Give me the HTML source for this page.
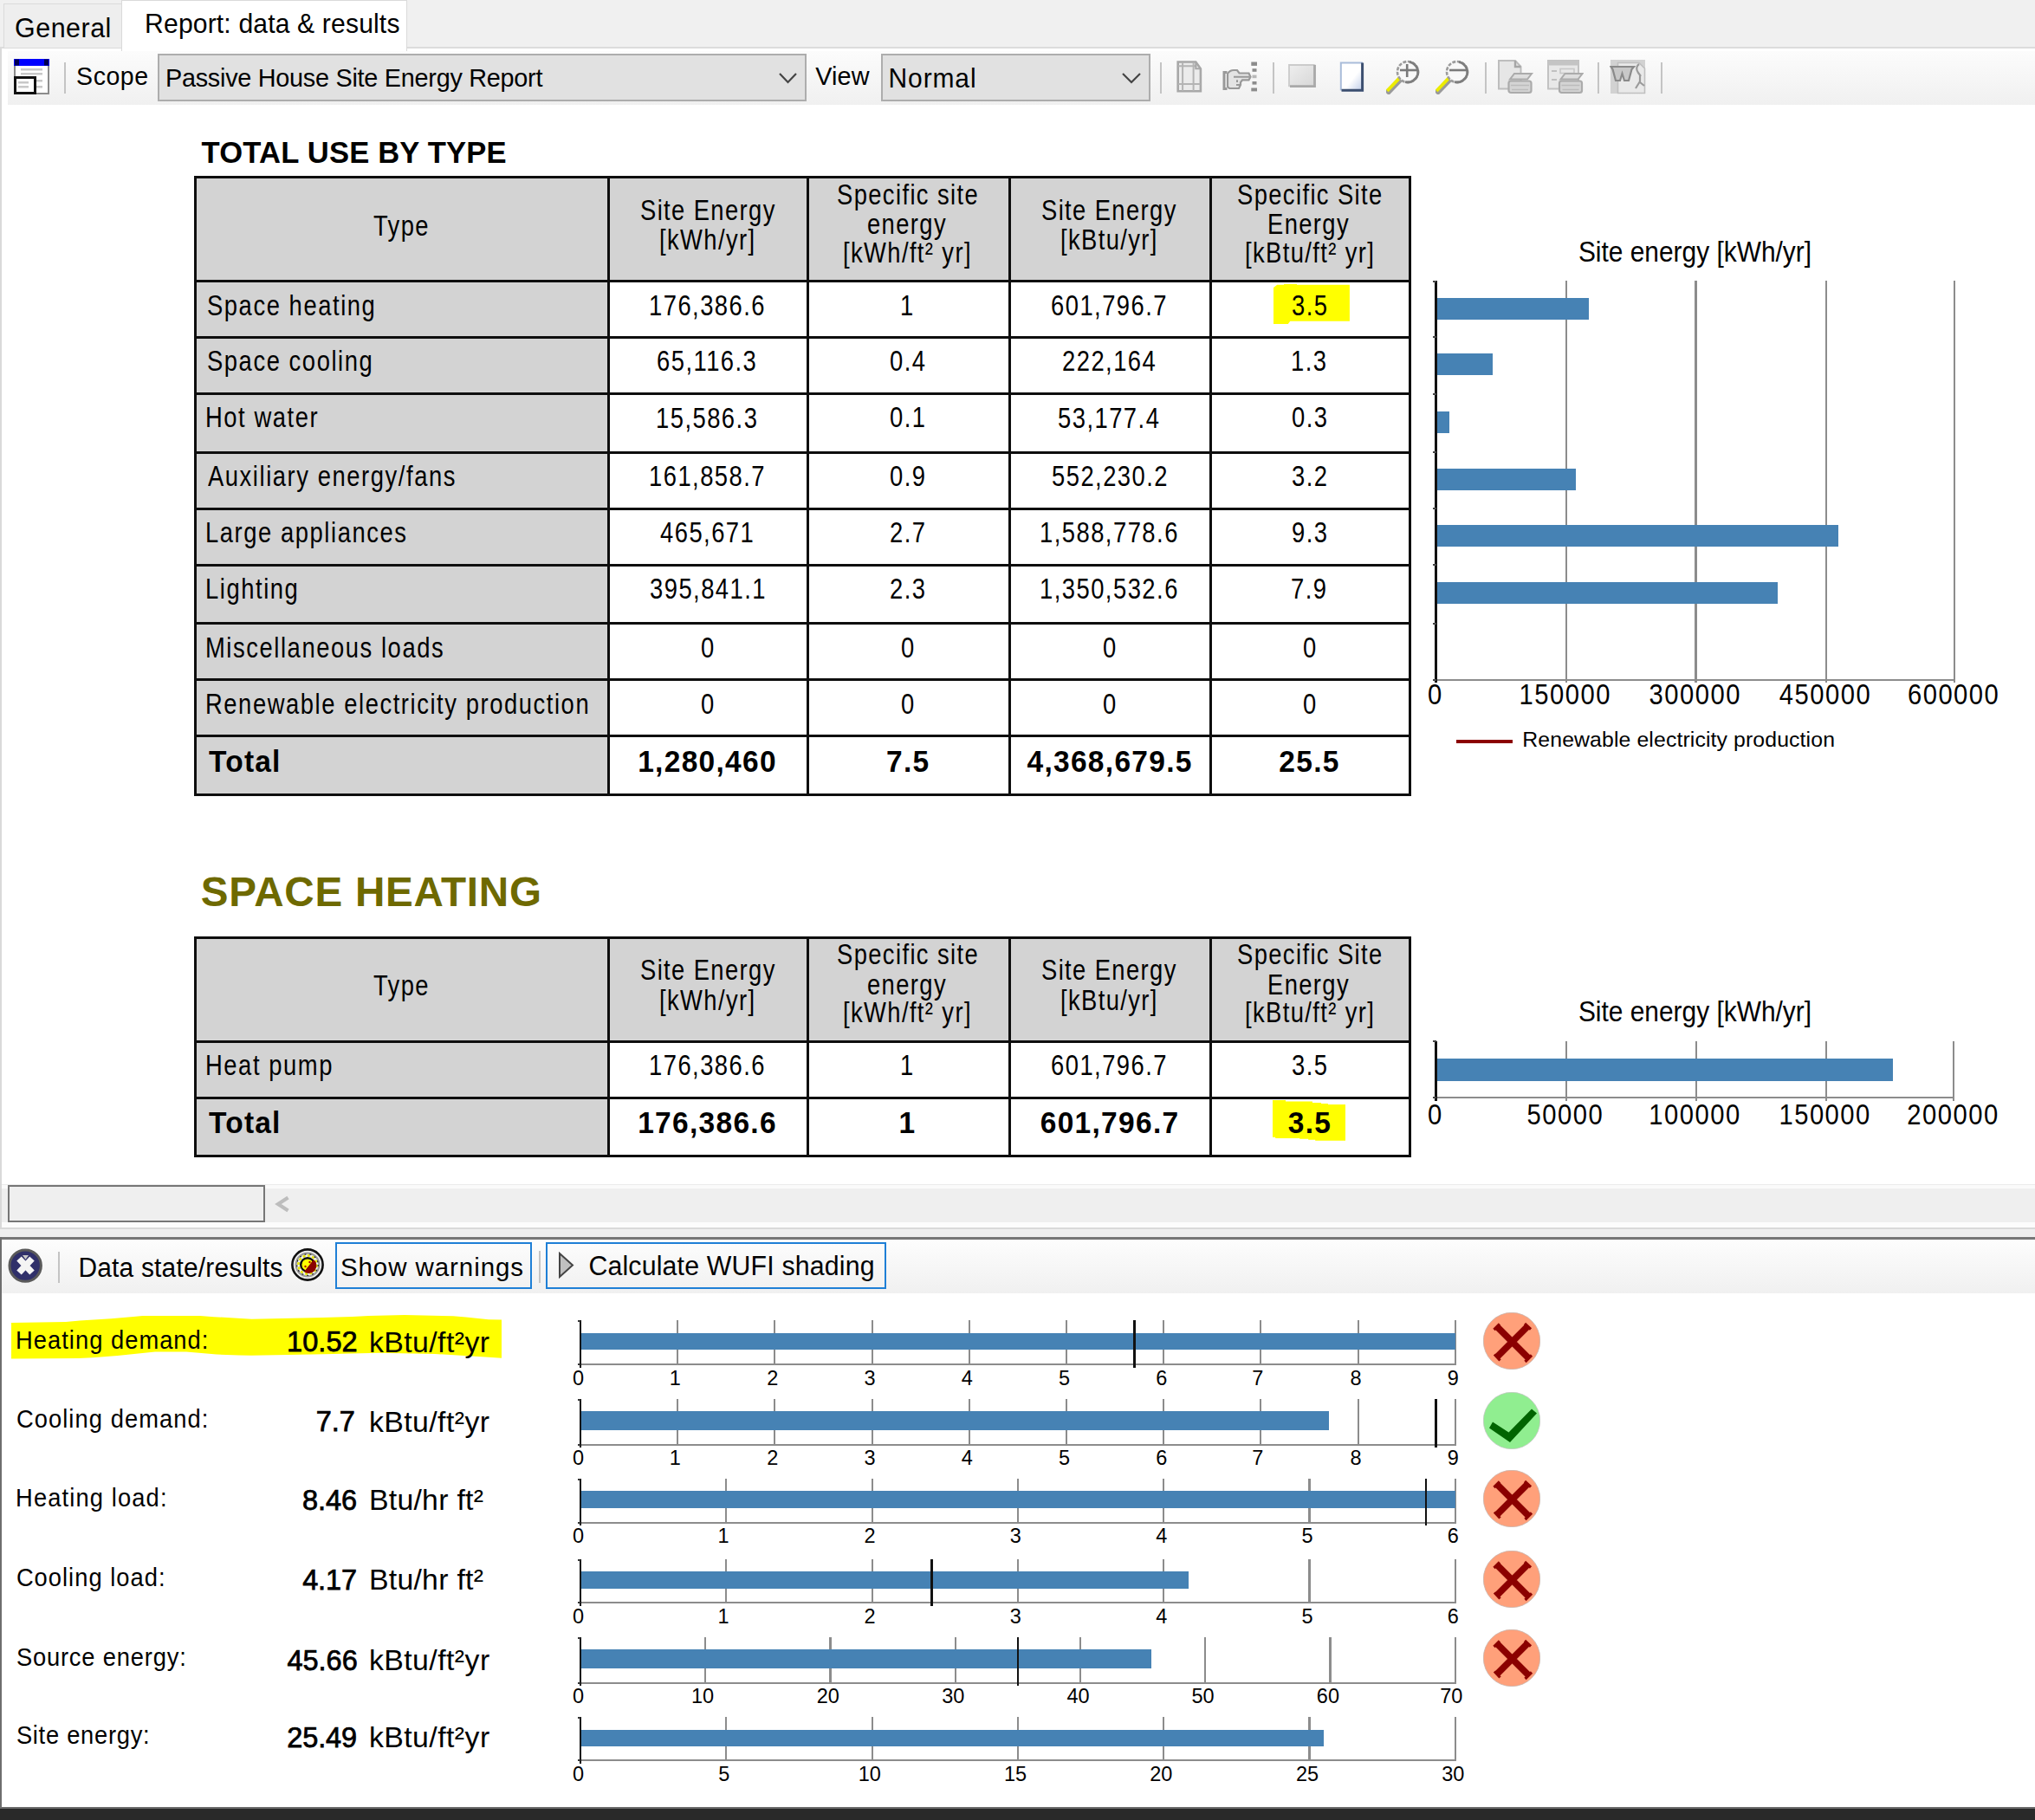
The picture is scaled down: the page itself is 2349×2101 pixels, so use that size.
<!DOCTYPE html>
<html><head><meta charset="utf-8"><style>
html,body{margin:0;padding:0;}
body{width:2349px;height:2101px;overflow:hidden;position:relative;background:#fff;font-family:"Liberation Sans",sans-serif;}
body>div,body>svg{position:absolute;}
</style></head><body>
<div style="left:0.00px;top:0.00px;width:2349.00px;height:55.00px;background:#f0f0f0;"></div>
<div style="left:0.00px;top:53.60px;width:2349.00px;height:2.00px;background:#dcdcdc;"></div>
<div style="left:4.00px;top:4.00px;width:137.00px;height:51.50px;border:1.5px solid #dadada;background:#eeeeee;box-sizing:border-box;"></div>
<div style="left:140.00px;top:0.00px;width:329.50px;height:58.50px;border:1.5px solid #dadada;background:#ffffff;box-sizing:border-box;border-bottom:none;"></div>
<div style="left:17.10px;top:17.46px;font-size:30.4px;line-height:30.4px;color:#000;letter-spacing:0.523px;white-space:pre;transform:scale(1.000,1.040);transform-origin:0 25.74px;">General</div>
<div style="left:167.10px;top:12.71px;font-size:30.1px;line-height:30.1px;color:#000;letter-spacing:0.157px;white-space:pre;transform:scale(1.000,1.040);transform-origin:0 25.49px;">Report: data &amp; results</div>
<div style="left:0.00px;top:56.00px;width:1.50px;height:1362.00px;background:#d9d9d9;"></div>
<div style="left:8.80px;top:58.50px;width:2340.20px;height:62.40px;background:linear-gradient(#fcfcfc,#f0f0f0);"></div>
<svg style="left:16px;top:68px" width="41" height="41" viewBox="0 0 41 41">
<rect x="1" y="1" width="39" height="39" fill="#fff" stroke="#8c8c8c" stroke-width="2"/>
<rect x="0" y="0" width="41" height="8" fill="#0000ff"/>
<rect x="1" y="0.5" width="5" height="7" fill="#000050"/><rect x="35" y="0.5" width="5" height="7" fill="#000050"/>
<rect x="8" y="11" width="25" height="2.5" fill="#c8c8c8"/><rect x="8" y="16" width="25" height="2.5" fill="#c8c8c8"/>
<rect x="25" y="24" width="8" height="2.5" fill="#c8c8c8"/><rect x="25" y="31" width="8" height="2.5" fill="#c8c8c8"/>
<rect x="1.5" y="21.5" width="23" height="18" fill="#fff" stroke="#111" stroke-width="3"/>
<rect x="5" y="26" width="12" height="2.5" fill="#c8c8c8"/><rect x="5" y="31" width="12" height="2.5" fill="#c8c8c8"/>
</svg>
<div style="left:74.20px;top:71.50px;width:2.00px;height:36.50px;background:#c4c4c4;"></div>
<div style="left:88.10px;top:74.17px;font-size:28.5px;line-height:28.5px;color:#000;letter-spacing:0.551px;white-space:pre;transform:scale(1.000,1.040);transform-origin:0 24.13px;">Scope</div>
<div style="left:182.00px;top:62.00px;width:748.50px;height:55.00px;border:2px solid #adadad;background:#e1e1e1;box-sizing:border-box;"></div>
<div style="left:191.00px;top:76.32px;font-size:28.8px;line-height:28.8px;color:#000;letter-spacing:-0.256px;white-space:pre;transform:scale(1.000,1.040);transform-origin:0 24.38px;">Passive House Site Energy Report</div>
<svg style="left:899px;top:84px" width="21" height="12.5" viewBox="0 0 21 12.5"><polyline points="1,1 10.5,11.0 20,1" fill="none" stroke="#444" stroke-width="2.2"/></svg>
<div style="left:941.20px;top:74.27px;font-size:28.8px;line-height:28.8px;color:#000;letter-spacing:0.174px;white-space:pre;transform:scale(1.000,1.040);transform-origin:0 24.38px;">View</div>
<div style="left:1017.00px;top:62.00px;width:311.00px;height:55.00px;border:2px solid #adadad;background:#e1e1e1;box-sizing:border-box;"></div>
<div style="left:1025.60px;top:75.76px;font-size:30px;line-height:30px;color:#000;letter-spacing:0.862px;white-space:pre;transform:scale(1.000,1.040);transform-origin:0 25.40px;">Normal</div>
<svg style="left:1295px;top:84px" width="22" height="12.5" viewBox="0 0 22 12.5"><polyline points="1,1 11.0,11.0 21,1" fill="none" stroke="#444" stroke-width="2.2"/></svg>
<div style="left:1339.30px;top:71.50px;width:2.00px;height:36.50px;background:#c4c4c4;"></div>
<div style="left:1469.00px;top:71.50px;width:2.00px;height:36.50px;background:#c4c4c4;"></div>
<div style="left:1713.70px;top:71.50px;width:2.00px;height:36.50px;background:#c4c4c4;"></div>
<div style="left:1844.00px;top:71.50px;width:2.00px;height:36.50px;background:#c4c4c4;"></div>
<div style="left:1917.00px;top:71.50px;width:2.00px;height:36.50px;background:#c4c4c4;"></div>
<svg style="left:1358px;top:70px" width="30" height="37" viewBox="0 0 30 37"><path d="M1.7 1.5 H22.3 L27.9 9.3 V35.2 H1.7 Z" fill="#ebebeb" stroke="#a8a8a8" stroke-width="2.6"/><path d="M7.1 2 V35 M19.6 2 V35 M2 6.3 H23.5 M2 27.1 H27.5" stroke="#b4b4b4" stroke-width="2"/><path d="M22.3 1.5 V9.3 H27.9" fill="none" stroke="#a8a8a8" stroke-width="2"/></svg>
<svg style="left:1410px;top:70px" width="43" height="37" viewBox="0 0 43 37"><rect x="34.3" y="1.5" width="6.7" height="4.4" fill="#8c8c8c"/><rect x="35.5" y="9.2" width="5" height="3.6" fill="#8c8c8c"/><rect x="35.5" y="16.6" width="5" height="3.6" fill="#b8b8b8"/><rect x="35.5" y="24" width="5" height="3.6" fill="#8c8c8c"/><rect x="34.3" y="31.5" width="6.7" height="3.9" fill="#8c8c8c"/><path d="M6.5 13.5 H3 V32.5 H6.5" fill="none" stroke="#999" stroke-width="3"/><path d="M7 15 C9 12 11 11 14 11 H18 L20.5 14.5 H31.5 L33.5 18.8 L31.5 22.3 H24 L22 25 V28 L20 32 H9 L7 30 Z" fill="#e4e4e4" stroke="#999" stroke-width="2.2"/><path d="M14 18.8 H32 M18 22.3 V25 M17 28 H22" stroke="#999" stroke-width="2"/></svg>
<svg style="left:1486px;top:73px" width="34" height="29" viewBox="0 0 34 29"><defs><linearGradient id="g3" x1="0" y1="0" x2="1" y2="1"><stop offset="0" stop-color="#efefef"/><stop offset="1" stop-color="#d6d6d6"/></linearGradient></defs><rect x="1.3" y="1.2" width="31.3" height="26.2" fill="url(#g3)"/><path d="M2 27 V2 H31.5" fill="none" stroke="#cbcbcb" stroke-width="1.8"/><path d="M31.5 2 V26.6 H3" fill="none" stroke="#a9a9a9" stroke-width="2.8"/></svg>
<svg style="left:1545px;top:70px" width="31" height="37" viewBox="0 0 31 37"><defs><linearGradient id="g4" x1="0" y1="0" x2="1" y2="1"><stop offset="0" stop-color="#fff"/><stop offset="0.55" stop-color="#fff"/><stop offset="1" stop-color="#b9c8e6"/></linearGradient></defs><rect x="1.8" y="1.5" width="27.2" height="34" fill="url(#g4)"/><path d="M2.8 34.5 V2.5 H28" fill="none" stroke="#a9bcd9" stroke-width="2"/><path d="M27.6 2.5 V34.2 H3.5" fill="none" stroke="#3c4f70" stroke-width="3"/></svg>
<svg style="left:1600px;top:69px" width="40" height="40" viewBox="0 0 40 40"><path d="M3 36.5 L15 24" stroke="#9a9a9a" stroke-width="6.5" stroke-linecap="square"/><path d="M2.5 34.5 L13.8 22.8" stroke="#ecec00" stroke-width="3.8" stroke-linecap="square"/><circle cx="25" cy="14" r="12" fill="#f8f8f8" stroke="#9c9c9c" stroke-width="2.6" stroke-dasharray="4 1.6"/><path d="M27 2.6 A12 12 0 0 1 36.5 17 M36.5 17 A12 12 0 0 1 22 25.6" fill="none" stroke="#7e7e7e" stroke-width="2.8"/><path d="M16 12 H37" stroke="#7a7a7a" stroke-width="2.6"/><path d="M24.2 5 V20" stroke="#7a7a7a" stroke-width="2.6"/></svg>
<svg style="left:1657.3px;top:69px" width="40" height="40" viewBox="0 0 40 40"><path d="M3 36.5 L15 24" stroke="#9a9a9a" stroke-width="6.5" stroke-linecap="square"/><path d="M2.5 34.5 L13.8 22.8" stroke="#ecec00" stroke-width="3.8" stroke-linecap="square"/><circle cx="25" cy="14" r="12" fill="#f8f8f8" stroke="#9c9c9c" stroke-width="2.6" stroke-dasharray="4 1.6"/><path d="M27 2.6 A12 12 0 0 1 36.5 17 M36.5 17 A12 12 0 0 1 22 25.6" fill="none" stroke="#7e7e7e" stroke-width="2.8"/><path d="M16 12 H37" stroke="#7a7a7a" stroke-width="2.6"/></svg>
<svg style="left:1728px;top:68px" width="43" height="41" viewBox="0 0 43 41"><path d="M2 2 H21 L27.5 9 V34.5 H2 Z" fill="#e6e6e6" stroke="#bdbdbd" stroke-width="2"/><path d="M21 2 V9 H27.5" fill="none" stroke="#a6a6a6" stroke-width="2.4"/><g transform="translate(12,15.5)"><path d="M8 1.5 H28 L23 8 H3 Z" fill="#dedede" stroke="#ababab" stroke-width="2"/><rect x="1.5" y="10" width="26" height="13.5" rx="2.5" fill="#d4d4d4" stroke="#ababab" stroke-width="2.2"/><path d="M4 15 H25 M5 20 H24" stroke="#bcbcbc" stroke-width="1.6"/></g></svg>
<svg style="left:1785px;top:68px" width="43" height="41" viewBox="0 0 43 41"><rect x="2" y="2" width="35" height="32.5" fill="#e8e8e8" stroke="#c2c2c2" stroke-width="2"/><rect x="2" y="2" width="35" height="5.5" fill="#c4c4c4"/><path d="M6 14 H12 M6 24 H12" stroke="#c0c0c0" stroke-width="2"/><rect x="16" y="11.5" width="16" height="5" fill="none" stroke="#c8c8c8" stroke-width="1.6"/><g transform="translate(13.5,15.5)"><path d="M8 1.5 H28 L23 8 H3 Z" fill="#dedede" stroke="#ababab" stroke-width="2"/><rect x="1.5" y="10" width="26" height="13.5" rx="2.5" fill="#d4d4d4" stroke="#ababab" stroke-width="2.2"/><path d="M4 15 H25 M5 20 H24" stroke="#bcbcbc" stroke-width="1.6"/></g></svg>
<svg style="left:1858px;top:68px" width="42" height="41" viewBox="0 0 42 41"><rect x="1" y="1" width="40" height="39" fill="#d2d2d2"/><path d="M9.5 4.5 H34 L40.5 11 V39.5 H9.5 Z" fill="#e9e9e9" stroke="#c0c0c0" stroke-width="1.6"/><path d="M1.5 9 H28 L25.5 12 L22 25 H17 L14.5 17 L12 25 H7 L3.5 12 Z" fill="#c8c8c8" stroke="#8a8a8a" stroke-width="2.2"/><path d="M34 6 C31 8 30 12 33 16 L36 20 M35 19 V26 L30 34 M35 27 L40 31" fill="none" stroke="#9a9a9a" stroke-width="2.2"/></svg>
<div style="left:232.60px;top:158.90px;font-size:34.6px;line-height:34.6px;color:#000;letter-spacing:0.188px;font-weight:bold;white-space:pre;">TOTAL USE BY TYPE</div>
<div style="left:231.80px;top:1005.70px;font-size:47.6px;line-height:47.6px;color:#6e6900;letter-spacing:0.736px;font-weight:bold;white-space:pre;">SPACE HEATING</div>
<div style="left:225.50px;top:204.70px;width:1402.30px;height:120.00px;background:#d3d3d3;"></div>
<div style="left:225.50px;top:204.70px;width:477.30px;height:712.70px;background:#d3d3d3;"></div>
<svg style="left:1470.00px;top:328.00px" width="87.90" height="46.00" viewBox="0 0 87.90 46.00"><polygon points="0.00,4.10 4.20,0.80 12.00,0.80 12.00,0.00 27.00,0.00 27.00,0.80 87.90,0.80 87.90,42.70 19.20,42.70 16.80,46.00 0.00,46.00" fill="#ffff00"/></svg>
<div style="left:224.00px;top:203.20px;width:1405.30px;height:3.00px;background:#0e0e0e;"></div>
<div style="left:224.00px;top:323.20px;width:1405.30px;height:3.00px;background:#0e0e0e;"></div>
<div style="left:224.00px;top:387.80px;width:1405.30px;height:3.00px;background:#0e0e0e;"></div>
<div style="left:224.00px;top:453.00px;width:1405.30px;height:3.00px;background:#0e0e0e;"></div>
<div style="left:224.00px;top:520.60px;width:1405.30px;height:3.00px;background:#0e0e0e;"></div>
<div style="left:224.00px;top:585.70px;width:1405.30px;height:3.00px;background:#0e0e0e;"></div>
<div style="left:224.00px;top:650.80px;width:1405.30px;height:3.00px;background:#0e0e0e;"></div>
<div style="left:224.00px;top:718.10px;width:1405.30px;height:3.00px;background:#0e0e0e;"></div>
<div style="left:224.00px;top:783.20px;width:1405.30px;height:3.00px;background:#0e0e0e;"></div>
<div style="left:224.00px;top:848.30px;width:1405.30px;height:3.00px;background:#0e0e0e;"></div>
<div style="left:224.00px;top:915.90px;width:1405.30px;height:3.00px;background:#0e0e0e;"></div>
<div style="left:224.00px;top:203.20px;width:3.00px;height:715.70px;background:#0e0e0e;"></div>
<div style="left:701.30px;top:203.20px;width:3.00px;height:715.70px;background:#0e0e0e;"></div>
<div style="left:931.30px;top:203.20px;width:3.00px;height:715.70px;background:#0e0e0e;"></div>
<div style="left:1163.80px;top:203.20px;width:3.00px;height:715.70px;background:#0e0e0e;"></div>
<div style="left:1396.30px;top:203.20px;width:3.00px;height:715.70px;background:#0e0e0e;"></div>
<div style="left:1626.30px;top:203.20px;width:3.00px;height:715.70px;background:#0e0e0e;"></div>
<div style="left:430.90px;top:245.76px;font-size:30.4px;line-height:30.4px;color:#000;letter-spacing:1.550px;white-space:pre;transform:scale(0.900,1.080);transform-origin:0 25.74px;">Type</div>
<div style="left:738.61px;top:227.86px;font-size:30.4px;line-height:30.4px;color:#000;letter-spacing:1.550px;white-space:pre;transform:scale(0.900,1.080);transform-origin:0 25.74px;">Site Energy</div>
<div style="left:761.25px;top:262.46px;font-size:30.4px;line-height:30.4px;color:#000;letter-spacing:1.550px;white-space:pre;transform:scale(0.900,1.080);transform-origin:0 25.74px;">[kWh/yr]</div>
<div style="left:965.80px;top:209.86px;font-size:30.4px;line-height:30.4px;color:#000;letter-spacing:1.550px;white-space:pre;transform:scale(0.900,1.080);transform-origin:0 25.74px;">Specific site</div>
<div style="left:1001.43px;top:244.26px;font-size:30.4px;line-height:30.4px;color:#000;letter-spacing:1.550px;white-space:pre;transform:scale(0.900,1.080);transform-origin:0 25.74px;">energy</div>
<div style="left:973.36px;top:276.76px;font-size:30.4px;line-height:30.4px;color:#000;letter-spacing:1.550px;white-space:pre;transform:scale(0.900,1.080);transform-origin:0 25.74px;">[kWh/ft² yr]</div>
<div style="left:1201.96px;top:227.86px;font-size:30.4px;line-height:30.4px;color:#000;letter-spacing:1.550px;white-space:pre;transform:scale(0.900,1.080);transform-origin:0 25.74px;">Site Energy</div>
<div style="left:1223.91px;top:262.46px;font-size:30.4px;line-height:30.4px;color:#000;letter-spacing:1.550px;white-space:pre;transform:scale(0.900,1.080);transform-origin:0 25.74px;">[kBtu/yr]</div>
<div style="left:1427.66px;top:209.86px;font-size:30.4px;line-height:30.4px;color:#000;letter-spacing:1.550px;white-space:pre;transform:scale(0.900,1.080);transform-origin:0 25.74px;">Specific Site</div>
<div style="left:1463.27px;top:244.26px;font-size:30.4px;line-height:30.4px;color:#000;letter-spacing:1.550px;white-space:pre;transform:scale(0.900,1.080);transform-origin:0 25.74px;">Energy</div>
<div style="left:1436.80px;top:276.76px;font-size:30.4px;line-height:30.4px;color:#000;letter-spacing:1.550px;white-space:pre;transform:scale(0.900,1.080);transform-origin:0 25.74px;">[kBtu/ft² yr]</div>
<div style="left:239.00px;top:337.76px;font-size:30.4px;line-height:30.4px;color:#000;letter-spacing:1.750px;white-space:pre;transform:scale(0.900,1.080);transform-origin:0 25.74px;">Space heating</div>
<div style="left:749.10px;top:337.76px;font-size:30.4px;line-height:30.4px;color:#000;letter-spacing:1.650px;white-space:pre;transform:scale(0.900,1.080);transform-origin:0 25.74px;">176,386.6</div>
<div style="left:1039.14px;top:337.76px;font-size:30.4px;line-height:30.4px;color:#000;letter-spacing:1.650px;white-space:pre;transform:scale(0.900,1.080);transform-origin:0 25.74px;">1</div>
<div style="left:1213.25px;top:337.76px;font-size:30.4px;line-height:30.4px;color:#000;letter-spacing:1.650px;white-space:pre;transform:scale(0.900,1.080);transform-origin:0 25.74px;">601,796.7</div>
<div style="left:1490.80px;top:337.76px;font-size:30.4px;line-height:30.4px;color:#000;letter-spacing:1.650px;white-space:pre;transform:scale(0.900,1.080);transform-origin:0 25.74px;">3.5</div>
<div style="left:239.00px;top:402.36px;font-size:30.4px;line-height:30.4px;color:#000;letter-spacing:1.750px;white-space:pre;transform:scale(0.900,1.080);transform-origin:0 25.74px;">Space cooling</div>
<div style="left:758.47px;top:402.36px;font-size:30.4px;line-height:30.4px;color:#000;letter-spacing:1.650px;white-space:pre;transform:scale(0.900,1.080);transform-origin:0 25.74px;">65,116.3</div>
<div style="left:1027.45px;top:402.36px;font-size:30.4px;line-height:30.4px;color:#000;letter-spacing:1.650px;white-space:pre;transform:scale(0.900,1.080);transform-origin:0 25.74px;">0.4</div>
<div style="left:1226.14px;top:402.36px;font-size:30.4px;line-height:30.4px;color:#000;letter-spacing:1.650px;white-space:pre;transform:scale(0.900,1.080);transform-origin:0 25.74px;">222,164</div>
<div style="left:1490.00px;top:402.36px;font-size:30.4px;line-height:30.4px;color:#000;letter-spacing:1.650px;white-space:pre;transform:scale(0.900,1.080);transform-origin:0 25.74px;">1.3</div>
<div style="left:237.40px;top:467.21px;font-size:30.4px;line-height:30.4px;color:#000;letter-spacing:1.750px;white-space:pre;transform:scale(0.900,1.080);transform-origin:0 25.74px;">Hot water</div>
<div style="left:757.45px;top:467.56px;font-size:30.4px;line-height:30.4px;color:#000;letter-spacing:1.650px;white-space:pre;transform:scale(0.900,1.080);transform-origin:0 25.74px;">15,586.3</div>
<div style="left:1027.45px;top:467.21px;font-size:30.4px;line-height:30.4px;color:#000;letter-spacing:1.650px;white-space:pre;transform:scale(0.900,1.080);transform-origin:0 25.74px;">0.1</div>
<div style="left:1221.20px;top:467.56px;font-size:30.4px;line-height:30.4px;color:#000;letter-spacing:1.650px;white-space:pre;transform:scale(0.900,1.080);transform-origin:0 25.74px;">53,177.4</div>
<div style="left:1490.80px;top:467.21px;font-size:30.4px;line-height:30.4px;color:#000;letter-spacing:1.650px;white-space:pre;transform:scale(0.900,1.080);transform-origin:0 25.74px;">0.3</div>
<div style="left:239.80px;top:535.16px;font-size:30.4px;line-height:30.4px;color:#000;letter-spacing:1.750px;white-space:pre;transform:scale(0.900,1.080);transform-origin:0 25.74px;">Auxiliary energy/fans</div>
<div style="left:749.10px;top:535.16px;font-size:30.4px;line-height:30.4px;color:#000;letter-spacing:1.650px;white-space:pre;transform:scale(0.900,1.080);transform-origin:0 25.74px;">161,858.7</div>
<div style="left:1027.45px;top:535.16px;font-size:30.4px;line-height:30.4px;color:#000;letter-spacing:1.650px;white-space:pre;transform:scale(0.900,1.080);transform-origin:0 25.74px;">0.9</div>
<div style="left:1213.65px;top:535.16px;font-size:30.4px;line-height:30.4px;color:#000;letter-spacing:1.650px;white-space:pre;transform:scale(0.900,1.080);transform-origin:0 25.74px;">552,230.2</div>
<div style="left:1490.80px;top:535.16px;font-size:30.4px;line-height:30.4px;color:#000;letter-spacing:1.650px;white-space:pre;transform:scale(0.900,1.080);transform-origin:0 25.74px;">3.2</div>
<div style="left:237.40px;top:600.26px;font-size:30.4px;line-height:30.4px;color:#000;letter-spacing:1.750px;white-space:pre;transform:scale(0.900,1.080);transform-origin:0 25.74px;">Large appliances</div>
<div style="left:761.99px;top:600.26px;font-size:30.4px;line-height:30.4px;color:#000;letter-spacing:1.650px;white-space:pre;transform:scale(0.900,1.080);transform-origin:0 25.74px;">465,671</div>
<div style="left:1027.45px;top:600.26px;font-size:30.4px;line-height:30.4px;color:#000;letter-spacing:1.650px;white-space:pre;transform:scale(0.900,1.080);transform-origin:0 25.74px;">2.7</div>
<div style="left:1200.35px;top:600.26px;font-size:30.4px;line-height:30.4px;color:#000;letter-spacing:1.650px;white-space:pre;transform:scale(0.900,1.080);transform-origin:0 25.74px;">1,588,778.6</div>
<div style="left:1490.80px;top:600.26px;font-size:30.4px;line-height:30.4px;color:#000;letter-spacing:1.650px;white-space:pre;transform:scale(0.900,1.080);transform-origin:0 25.74px;">9.3</div>
<div style="left:237.40px;top:665.36px;font-size:30.4px;line-height:30.4px;color:#000;letter-spacing:1.750px;white-space:pre;transform:scale(0.900,1.080);transform-origin:0 25.74px;">Lighting</div>
<div style="left:749.50px;top:665.36px;font-size:30.4px;line-height:30.4px;color:#000;letter-spacing:1.650px;white-space:pre;transform:scale(0.900,1.080);transform-origin:0 25.74px;">395,841.1</div>
<div style="left:1027.05px;top:665.36px;font-size:30.4px;line-height:30.4px;color:#000;letter-spacing:1.650px;white-space:pre;transform:scale(0.900,1.080);transform-origin:0 25.74px;">2.3</div>
<div style="left:1200.35px;top:665.36px;font-size:30.4px;line-height:30.4px;color:#000;letter-spacing:1.650px;white-space:pre;transform:scale(0.900,1.080);transform-origin:0 25.74px;">1,350,532.6</div>
<div style="left:1490.40px;top:665.36px;font-size:30.4px;line-height:30.4px;color:#000;letter-spacing:1.650px;white-space:pre;transform:scale(0.900,1.080);transform-origin:0 25.74px;">7.9</div>
<div style="left:237.40px;top:732.66px;font-size:30.4px;line-height:30.4px;color:#000;letter-spacing:1.750px;white-space:pre;transform:scale(0.900,1.080);transform-origin:0 25.74px;">Miscellaneous loads</div>
<div style="left:808.69px;top:732.66px;font-size:30.4px;line-height:30.4px;color:#000;letter-spacing:1.650px;white-space:pre;transform:scale(0.900,1.080);transform-origin:0 25.74px;">0</div>
<div style="left:1040.34px;top:732.66px;font-size:30.4px;line-height:30.4px;color:#000;letter-spacing:1.650px;white-space:pre;transform:scale(0.900,1.080);transform-origin:0 25.74px;">0</div>
<div style="left:1272.84px;top:732.66px;font-size:30.4px;line-height:30.4px;color:#000;letter-spacing:1.650px;white-space:pre;transform:scale(0.900,1.080);transform-origin:0 25.74px;">0</div>
<div style="left:1503.69px;top:732.66px;font-size:30.4px;line-height:30.4px;color:#000;letter-spacing:1.650px;white-space:pre;transform:scale(0.900,1.080);transform-origin:0 25.74px;">0</div>
<div style="left:237.40px;top:797.76px;font-size:30.4px;line-height:30.4px;color:#000;letter-spacing:1.750px;white-space:pre;transform:scale(0.900,1.080);transform-origin:0 25.74px;">Renewable electricity production</div>
<div style="left:808.69px;top:797.76px;font-size:30.4px;line-height:30.4px;color:#000;letter-spacing:1.650px;white-space:pre;transform:scale(0.900,1.080);transform-origin:0 25.74px;">0</div>
<div style="left:1040.34px;top:797.76px;font-size:30.4px;line-height:30.4px;color:#000;letter-spacing:1.650px;white-space:pre;transform:scale(0.900,1.080);transform-origin:0 25.74px;">0</div>
<div style="left:1272.84px;top:797.76px;font-size:30.4px;line-height:30.4px;color:#000;letter-spacing:1.650px;white-space:pre;transform:scale(0.900,1.080);transform-origin:0 25.74px;">0</div>
<div style="left:1503.69px;top:797.76px;font-size:30.4px;line-height:30.4px;color:#000;letter-spacing:1.650px;white-space:pre;transform:scale(0.900,1.080);transform-origin:0 25.74px;">0</div>
<div style="left:241.10px;top:862.64px;font-size:33.5px;line-height:33.5px;color:#000;letter-spacing:1.200px;font-weight:bold;white-space:pre;transform:scale(1.000,1.040);transform-origin:0 28.36px;">Total</div>
<div style="left:736.18px;top:862.64px;font-size:33.5px;line-height:33.5px;color:#000;letter-spacing:1.300px;font-weight:bold;white-space:pre;transform:scale(1.000,1.040);transform-origin:0 28.36px;">1,280,460</div>
<div style="left:1022.97px;top:862.64px;font-size:33.5px;line-height:33.5px;color:#000;letter-spacing:1.300px;font-weight:bold;white-space:pre;transform:scale(1.000,1.040);transform-origin:0 28.36px;">7.5</div>
<div style="left:1185.46px;top:862.64px;font-size:33.5px;line-height:33.5px;color:#000;letter-spacing:1.300px;font-weight:bold;white-space:pre;transform:scale(1.000,1.040);transform-origin:0 28.36px;">4,368,679.5</div>
<div style="left:1476.35px;top:862.64px;font-size:33.5px;line-height:33.5px;color:#000;letter-spacing:1.300px;font-weight:bold;white-space:pre;transform:scale(1.000,1.040);transform-origin:0 28.36px;">25.5</div>
<div style="left:225.50px;top:1082.30px;width:1402.30px;height:120.00px;background:#d3d3d3;"></div>
<div style="left:225.50px;top:1082.30px;width:477.30px;height:252.30px;background:#d3d3d3;"></div>
<svg style="left:1468.90px;top:1270.00px" width="84.00" height="46.80" viewBox="0 0 84.00 46.80"><polygon points="0.00,0.00 15.00,0.00 15.00,1.40 45.90,1.40 45.90,2.90 56.00,2.90 56.00,4.10 63.90,4.10 63.90,5.00 84.00,5.00 84.00,46.80 49.20,46.80 49.20,45.70 41.20,45.70 41.20,44.80 31.20,44.80 31.20,43.90 3.20,43.90 3.20,42.80 0.00,42.80" fill="#ffff00"/></svg>
<div style="left:224.00px;top:1080.80px;width:1405.30px;height:3.00px;background:#0e0e0e;"></div>
<div style="left:224.00px;top:1200.80px;width:1405.30px;height:3.00px;background:#0e0e0e;"></div>
<div style="left:224.00px;top:1265.60px;width:1405.30px;height:3.00px;background:#0e0e0e;"></div>
<div style="left:224.00px;top:1333.10px;width:1405.30px;height:3.00px;background:#0e0e0e;"></div>
<div style="left:224.00px;top:1080.80px;width:3.00px;height:255.30px;background:#0e0e0e;"></div>
<div style="left:701.30px;top:1080.80px;width:3.00px;height:255.30px;background:#0e0e0e;"></div>
<div style="left:931.30px;top:1080.80px;width:3.00px;height:255.30px;background:#0e0e0e;"></div>
<div style="left:1163.80px;top:1080.80px;width:3.00px;height:255.30px;background:#0e0e0e;"></div>
<div style="left:1396.30px;top:1080.80px;width:3.00px;height:255.30px;background:#0e0e0e;"></div>
<div style="left:1626.30px;top:1080.80px;width:3.00px;height:255.30px;background:#0e0e0e;"></div>
<div style="left:430.90px;top:1123.36px;font-size:30.4px;line-height:30.4px;color:#000;letter-spacing:1.550px;white-space:pre;transform:scale(0.900,1.080);transform-origin:0 25.74px;">Type</div>
<div style="left:738.61px;top:1105.46px;font-size:30.4px;line-height:30.4px;color:#000;letter-spacing:1.550px;white-space:pre;transform:scale(0.900,1.080);transform-origin:0 25.74px;">Site Energy</div>
<div style="left:761.25px;top:1140.06px;font-size:30.4px;line-height:30.4px;color:#000;letter-spacing:1.550px;white-space:pre;transform:scale(0.900,1.080);transform-origin:0 25.74px;">[kWh/yr]</div>
<div style="left:965.80px;top:1087.46px;font-size:30.4px;line-height:30.4px;color:#000;letter-spacing:1.550px;white-space:pre;transform:scale(0.900,1.080);transform-origin:0 25.74px;">Specific site</div>
<div style="left:1001.43px;top:1121.86px;font-size:30.4px;line-height:30.4px;color:#000;letter-spacing:1.550px;white-space:pre;transform:scale(0.900,1.080);transform-origin:0 25.74px;">energy</div>
<div style="left:973.36px;top:1154.36px;font-size:30.4px;line-height:30.4px;color:#000;letter-spacing:1.550px;white-space:pre;transform:scale(0.900,1.080);transform-origin:0 25.74px;">[kWh/ft² yr]</div>
<div style="left:1201.96px;top:1105.46px;font-size:30.4px;line-height:30.4px;color:#000;letter-spacing:1.550px;white-space:pre;transform:scale(0.900,1.080);transform-origin:0 25.74px;">Site Energy</div>
<div style="left:1223.91px;top:1140.06px;font-size:30.4px;line-height:30.4px;color:#000;letter-spacing:1.550px;white-space:pre;transform:scale(0.900,1.080);transform-origin:0 25.74px;">[kBtu/yr]</div>
<div style="left:1427.66px;top:1087.46px;font-size:30.4px;line-height:30.4px;color:#000;letter-spacing:1.550px;white-space:pre;transform:scale(0.900,1.080);transform-origin:0 25.74px;">Specific Site</div>
<div style="left:1463.27px;top:1121.86px;font-size:30.4px;line-height:30.4px;color:#000;letter-spacing:1.550px;white-space:pre;transform:scale(0.900,1.080);transform-origin:0 25.74px;">Energy</div>
<div style="left:1436.80px;top:1154.36px;font-size:30.4px;line-height:30.4px;color:#000;letter-spacing:1.550px;white-space:pre;transform:scale(0.900,1.080);transform-origin:0 25.74px;">[kBtu/ft² yr]</div>
<div style="left:237.40px;top:1215.36px;font-size:30.4px;line-height:30.4px;color:#000;letter-spacing:1.750px;white-space:pre;transform:scale(0.900,1.080);transform-origin:0 25.74px;">Heat pump</div>
<div style="left:749.10px;top:1215.36px;font-size:30.4px;line-height:30.4px;color:#000;letter-spacing:1.650px;white-space:pre;transform:scale(0.900,1.080);transform-origin:0 25.74px;">176,386.6</div>
<div style="left:1039.14px;top:1215.36px;font-size:30.4px;line-height:30.4px;color:#000;letter-spacing:1.650px;white-space:pre;transform:scale(0.900,1.080);transform-origin:0 25.74px;">1</div>
<div style="left:1213.25px;top:1215.36px;font-size:30.4px;line-height:30.4px;color:#000;letter-spacing:1.650px;white-space:pre;transform:scale(0.900,1.080);transform-origin:0 25.74px;">601,796.7</div>
<div style="left:1490.80px;top:1215.36px;font-size:30.4px;line-height:30.4px;color:#000;letter-spacing:1.650px;white-space:pre;transform:scale(0.900,1.080);transform-origin:0 25.74px;">3.5</div>
<div style="left:241.10px;top:1280.29px;font-size:33.5px;line-height:33.5px;color:#000;letter-spacing:1.200px;font-weight:bold;white-space:pre;transform:scale(1.000,1.040);transform-origin:0 28.36px;">Total</div>
<div style="left:736.18px;top:1279.94px;font-size:33.5px;line-height:33.5px;color:#000;letter-spacing:1.300px;font-weight:bold;white-space:pre;transform:scale(1.000,1.040);transform-origin:0 28.36px;">176,386.6</div>
<div style="left:1037.44px;top:1280.29px;font-size:33.5px;line-height:33.5px;color:#000;letter-spacing:1.300px;font-weight:bold;white-space:pre;transform:scale(1.000,1.040);transform-origin:0 28.36px;">1</div>
<div style="left:1200.73px;top:1279.94px;font-size:33.5px;line-height:33.5px;color:#000;letter-spacing:1.300px;font-weight:bold;white-space:pre;transform:scale(1.000,1.040);transform-origin:0 28.36px;">601,796.7</div>
<div style="left:1486.72px;top:1280.29px;font-size:33.5px;line-height:33.5px;color:#000;letter-spacing:1.300px;font-weight:bold;white-space:pre;transform:scale(1.000,1.040);transform-origin:0 28.36px;">3.5</div>
<div style="left:1821.91px;top:276.68px;font-size:29.9px;line-height:29.9px;color:#000;letter-spacing:0.000px;white-space:pre;transform:scale(1.000,1.130);transform-origin:0 25.32px;">Site energy [kWh/yr]</div>
<div style="left:1806.80px;top:324.40px;width:2.20px;height:464.00px;background:#8c8c8c;"></div>
<div style="left:1956.40px;top:324.40px;width:2.20px;height:464.00px;background:#8c8c8c;"></div>
<div style="left:2106.60px;top:324.40px;width:2.20px;height:464.00px;background:#8c8c8c;"></div>
<div style="left:2254.80px;top:324.40px;width:2.20px;height:464.00px;background:#8c8c8c;"></div>
<div style="left:1657.70px;top:783.80px;width:599.20px;height:2.20px;background:#8c8c8c;"></div>
<div style="left:1657.70px;top:343.50px;width:175.86px;height:25.00px;background:#4682b4;"></div>
<div style="left:1657.70px;top:408.40px;width:64.92px;height:25.00px;background:#4682b4;"></div>
<div style="left:1657.70px;top:474.80px;width:15.54px;height:25.00px;background:#4682b4;"></div>
<div style="left:1657.70px;top:541.15px;width:161.37px;height:25.00px;background:#4682b4;"></div>
<div style="left:1657.70px;top:606.25px;width:464.27px;height:25.00px;background:#4682b4;"></div>
<div style="left:1657.70px;top:672.45px;width:394.65px;height:25.00px;background:#4682b4;"></div>
<div style="left:1656.40px;top:324.40px;width:2.60px;height:464.00px;background:#111;"></div>
<div style="left:1654.20px;top:323.70px;width:3.50px;height:2.00px;background:#444;"></div>
<div style="left:1654.20px;top:388.30px;width:3.50px;height:2.00px;background:#444;"></div>
<div style="left:1654.20px;top:453.50px;width:3.50px;height:2.00px;background:#444;"></div>
<div style="left:1654.20px;top:521.10px;width:3.50px;height:2.00px;background:#444;"></div>
<div style="left:1654.20px;top:586.20px;width:3.50px;height:2.00px;background:#444;"></div>
<div style="left:1654.20px;top:651.30px;width:3.50px;height:2.00px;background:#444;"></div>
<div style="left:1654.20px;top:718.60px;width:3.50px;height:2.00px;background:#444;"></div>
<div style="left:1654.20px;top:783.70px;width:3.50px;height:2.00px;background:#444;"></div>
<div style="left:1648.08px;top:789.12px;font-size:29.2px;line-height:29.2px;color:#000;letter-spacing:1.500px;white-space:pre;transform:scale(1.000,1.130);transform-origin:0 24.72px;">0</div>
<div style="left:1753.53px;top:789.12px;font-size:29.2px;line-height:29.2px;color:#000;letter-spacing:1.500px;white-space:pre;transform:scale(1.000,1.130);transform-origin:0 24.72px;">150000</div>
<div style="left:1903.53px;top:789.12px;font-size:29.2px;line-height:29.2px;color:#000;letter-spacing:1.500px;white-space:pre;transform:scale(1.000,1.130);transform-origin:0 24.72px;">300000</div>
<div style="left:2053.73px;top:789.12px;font-size:29.2px;line-height:29.2px;color:#000;letter-spacing:1.500px;white-space:pre;transform:scale(1.000,1.130);transform-origin:0 24.72px;">450000</div>
<div style="left:2201.93px;top:789.12px;font-size:29.2px;line-height:29.2px;color:#000;letter-spacing:1.500px;white-space:pre;transform:scale(1.000,1.130);transform-origin:0 24.72px;">600000</div>
<div style="left:1681.30px;top:854.30px;width:64.70px;height:4.00px;background:#8b0000;"></div>
<div style="left:1757.30px;top:842.20px;font-size:24.8px;line-height:24.8px;color:#000;letter-spacing:0.118px;white-space:pre;">Renewable electricity production</div>
<div style="left:1821.91px;top:1153.68px;font-size:29.9px;line-height:29.9px;color:#000;letter-spacing:0.000px;white-space:pre;transform:scale(1.000,1.130);transform-origin:0 25.32px;">Site energy [kWh/yr]</div>
<div style="left:1806.60px;top:1201.60px;width:2.20px;height:69.10px;background:#8c8c8c;"></div>
<div style="left:1956.50px;top:1201.60px;width:2.20px;height:69.10px;background:#8c8c8c;"></div>
<div style="left:2106.70px;top:1201.60px;width:2.20px;height:69.10px;background:#8c8c8c;"></div>
<div style="left:2254.10px;top:1201.60px;width:2.20px;height:69.10px;background:#8c8c8c;"></div>
<div style="left:1657.70px;top:1266.10px;width:598.50px;height:2.20px;background:#8c8c8c;"></div>
<div style="left:1657.70px;top:1221.60px;width:526.95px;height:26.60px;background:#4682b4;"></div>
<div style="left:1656.40px;top:1201.60px;width:2.60px;height:69.10px;background:#111;"></div>
<div style="left:1654.20px;top:1200.60px;width:3.50px;height:2.00px;background:#444;"></div>
<div style="left:1654.20px;top:1266.20px;width:3.50px;height:2.00px;background:#444;"></div>
<div style="left:1648.08px;top:1273.61px;font-size:29.2px;line-height:29.2px;color:#000;letter-spacing:1.500px;white-space:pre;transform:scale(1.000,1.130);transform-origin:0 24.72px;">0</div>
<div style="left:1762.60px;top:1273.61px;font-size:29.2px;line-height:29.2px;color:#000;letter-spacing:1.500px;white-space:pre;transform:scale(1.000,1.130);transform-origin:0 24.72px;">50000</div>
<div style="left:1903.23px;top:1273.61px;font-size:29.2px;line-height:29.2px;color:#000;letter-spacing:1.500px;white-space:pre;transform:scale(1.000,1.130);transform-origin:0 24.72px;">100000</div>
<div style="left:2053.43px;top:1273.61px;font-size:29.2px;line-height:29.2px;color:#000;letter-spacing:1.500px;white-space:pre;transform:scale(1.000,1.130);transform-origin:0 24.72px;">150000</div>
<div style="left:2201.23px;top:1273.61px;font-size:29.2px;line-height:29.2px;color:#000;letter-spacing:1.500px;white-space:pre;transform:scale(1.000,1.130);transform-origin:0 24.72px;">200000</div>
<div style="left:2.00px;top:1366.50px;width:2347.00px;height:1.50px;background:#ebebeb;"></div>
<div style="left:2.00px;top:1368.00px;width:2347.00px;height:3.50px;background:#fafafa;"></div>
<div style="left:2.00px;top:1371.50px;width:2347.00px;height:39.50px;background:#efefef;"></div>
<div style="left:1.50px;top:1411.00px;width:2349.00px;height:6.00px;background:#fcfcfc;"></div>
<div style="left:0.00px;top:1417.00px;width:2349.00px;height:2.00px;background:#d9d9d9;"></div>
<div style="left:0.00px;top:1419.00px;width:2349.00px;height:9.00px;background:#efefef;"></div>
<div style="left:8.90px;top:1368.30px;width:297.60px;height:42.70px;border:2.7px solid #767676;background:#efefef;box-sizing:border-box;"></div>
<svg style="left:317px;top:1379px" width="20" height="22" viewBox="0 0 20 22"><polyline points="15.5,3.5 4,11 15.5,18.5" fill="none" stroke="#bdbdbd" stroke-width="4.2" stroke-linejoin="miter"/></svg>
<div style="left:0.00px;top:1428.00px;width:2349.00px;height:3.50px;background:#777777;"></div>
<div style="left:2.00px;top:1431.00px;width:2347.00px;height:62.00px;background:linear-gradient(#fdfdfd,#f0f0f0);"></div>
<svg style="left:9px;top:1440.5px" width="41" height="41" viewBox="0 0 41 41">
<circle cx="20.2" cy="20.1" r="18.2" fill="#30306a" stroke="#5a5a5a" stroke-width="3"/>
<path d="M13 12 L28 28 M28 12 L13 28" stroke="#f4f4f4" stroke-width="7.5" stroke-linecap="butt"/>
<path d="M17 8 H24 L20.5 13 Z" fill="#c8c8c8"/></svg>
<div style="left:66.80px;top:1445.00px;width:2.00px;height:36.00px;background:#c4c4c4;"></div>
<div style="left:90.50px;top:1448.68px;font-size:29.9px;line-height:29.9px;color:#000;letter-spacing:0.203px;white-space:pre;transform:scale(1.000,1.030);transform-origin:0 25.32px;">Data state/results</div>
<svg style="left:335px;top:1440px" width="40" height="40" viewBox="0 0 40 40">
<circle cx="20" cy="20" r="17.6" fill="#f0f0f0" stroke="#111" stroke-width="2.6"/>
<circle cx="20" cy="20" r="13.4" fill="none" stroke="#9a9a9a" stroke-width="2.2"/>
<circle cx="20" cy="20" r="10.6" fill="none" stroke="#e6e600" stroke-width="2.6" stroke-dasharray="3 2.5"/>
<circle cx="20" cy="20" r="12.3" fill="none" stroke="#222" stroke-width="1.2" stroke-dasharray="2 4"/>
<circle cx="20" cy="20" r="7.8" fill="#ffff00" stroke="#0a0a0a" stroke-width="2.4"/>
<path d="M27 14 A7.8 7.8 0 0 1 16 28 Z" fill="#8a0000"/>
<circle cx="22.5" cy="17" r="1.2" fill="#a00"/><circle cx="17.5" cy="22" r="1.2" fill="#a00"/></svg>
<div style="left:386.60px;top:1434.40px;width:227.00px;height:53.50px;border:2.4px solid #1e7fd6;background:transparent;box-sizing:border-box;"></div>
<div style="left:392.90px;top:1448.02px;font-size:29.5px;line-height:29.5px;color:#000;letter-spacing:0.930px;white-space:pre;transform:scale(1.000,1.030);transform-origin:0 24.98px;">Show warnings</div>
<div style="left:622.00px;top:1444.00px;width:2.00px;height:37.00px;background:#c4c4c4;"></div>
<div style="left:629.70px;top:1434.40px;width:393.50px;height:53.50px;border:2.4px solid #1e7fd6;background:transparent;box-sizing:border-box;"></div>
<svg style="left:644px;top:1445px" width="20" height="31" viewBox="0 0 20 31"><path d="M2 2 L17 15.5 L2 29 Z" fill="#c0c0c0" stroke="#444" stroke-width="2" stroke-linejoin="miter"/></svg>
<div style="left:679.40px;top:1447.35px;font-size:30.3px;line-height:30.3px;color:#000;letter-spacing:0.167px;white-space:pre;transform:scale(1.000,1.030);transform-origin:0 25.65px;">Calculate WUFI shading</div>
<svg style="left:13px;top:1518.1px" width="566.0" height="50.6" viewBox="0 0 566.0 50.6"><polygon points="0.0,9.0 63.0,8.1 79.0,6.4 115.0,4.2 141.0,2.0 151.5,1.0 218.0,1.0 234.0,2.2 277.5,4.7 359.6,3.0 393.5,2.1 412.6,1.0 454.0,0.0 510.0,1.2 524.7,2.5 551.0,5.2 566.0,5.4 566.0,49.7 551.0,48.7 489.0,44.9 424.5,43.8 361.0,45.3 277.0,46.8 263.0,46.4 237.0,45.5 202.0,42.6 166.0,42.6 137.0,45.6 122.5,46.9 93.5,49.3 77.5,49.9 0.0,50.6" fill="#ffff00"/></svg>
<div style="left:18.10px;top:1534.09px;font-size:27.3px;line-height:27.3px;color:#000;letter-spacing:1.027px;white-space:pre;transform:scale(1.000,1.060);transform-origin:0 23.11px;">Heating demand:</div>
<div style="left:331.00px;top:1533.26px;font-size:32.5px;line-height:32.5px;color:#000;letter-spacing:0.071px;white-space:pre;-webkit-text-stroke:0.75px #000;">10.52</div>
<div style="left:425.90px;top:1532.58px;font-size:33.8px;line-height:33.8px;color:#000;letter-spacing:0.430px;white-space:pre;">kBtu/ft²yr</div>
<div style="left:781.10px;top:1524.40px;width:2.20px;height:50.70px;background:#8c8c8c;"></div>
<div style="left:893.30px;top:1524.40px;width:2.20px;height:50.70px;background:#8c8c8c;"></div>
<div style="left:1005.50px;top:1524.40px;width:2.20px;height:50.70px;background:#8c8c8c;"></div>
<div style="left:1117.70px;top:1524.40px;width:2.20px;height:50.70px;background:#8c8c8c;"></div>
<div style="left:1229.90px;top:1524.40px;width:2.20px;height:50.70px;background:#8c8c8c;"></div>
<div style="left:1342.10px;top:1524.40px;width:2.20px;height:50.70px;background:#8c8c8c;"></div>
<div style="left:1454.30px;top:1524.40px;width:2.20px;height:50.70px;background:#8c8c8c;"></div>
<div style="left:1566.50px;top:1524.40px;width:2.20px;height:50.70px;background:#8c8c8c;"></div>
<div style="left:1678.70px;top:1524.40px;width:2.20px;height:50.70px;background:#8c8c8c;"></div>
<div style="left:670.00px;top:1574.00px;width:1010.80px;height:2.20px;background:#8c8c8c;"></div>
<div style="left:670.00px;top:1538.70px;width:1009.80px;height:19.80px;background:#4682b4;"></div>
<div style="left:668.70px;top:1524.40px;width:2.60px;height:54.20px;background:#111;"></div>
<div style="left:666.50px;top:1524.40px;width:3.50px;height:2.00px;background:#333;"></div>
<div style="left:666.50px;top:1574.10px;width:3.50px;height:2.00px;background:#333;"></div>
<div style="left:1308.24px;top:1524.40px;width:2.60px;height:54.20px;background:#111;"></div>
<div style="left:660.97px;top:1579.82px;font-size:23.5px;line-height:23.5px;color:#000;letter-spacing:0.000px;white-space:pre;">0</div>
<div style="left:772.77px;top:1579.82px;font-size:23.5px;line-height:23.5px;color:#000;letter-spacing:0.000px;white-space:pre;">1</div>
<div style="left:885.37px;top:1579.82px;font-size:23.5px;line-height:23.5px;color:#000;letter-spacing:0.000px;white-space:pre;">2</div>
<div style="left:997.57px;top:1579.82px;font-size:23.5px;line-height:23.5px;color:#000;letter-spacing:0.000px;white-space:pre;">3</div>
<div style="left:1109.77px;top:1579.82px;font-size:23.5px;line-height:23.5px;color:#000;letter-spacing:0.000px;white-space:pre;">4</div>
<div style="left:1221.97px;top:1579.82px;font-size:23.5px;line-height:23.5px;color:#000;letter-spacing:0.000px;white-space:pre;">5</div>
<div style="left:1334.17px;top:1579.82px;font-size:23.5px;line-height:23.5px;color:#000;letter-spacing:0.000px;white-space:pre;">6</div>
<div style="left:1445.17px;top:1579.82px;font-size:23.5px;line-height:23.5px;color:#000;letter-spacing:0.000px;white-space:pre;">7</div>
<div style="left:1558.57px;top:1579.82px;font-size:23.5px;line-height:23.5px;color:#000;letter-spacing:0.000px;white-space:pre;">8</div>
<div style="left:1670.77px;top:1579.82px;font-size:23.5px;line-height:23.5px;color:#000;letter-spacing:0.000px;white-space:pre;">9</div>
<svg style="left:1711.90px;top:1514.55px" width="66" height="66" viewBox="0 0 66 66"><circle cx="33" cy="33" r="32.7" fill="#ffa07a" stroke="#c8b4ac" stroke-width="0.8"/><path d="M16.5 17 L52 52.5 M51.5 16 L16 51.5" stroke="#8b0000" stroke-width="7.6"/><path d="M12.5 20 L19 13.5 M48.5 57 L56 49.5 M48 13 L55 19.5 M13 48.5 L19.5 55.5" stroke="#8b0000" stroke-width="3.2"/></svg>
<div style="left:18.90px;top:1625.19px;font-size:27.3px;line-height:27.3px;color:#000;letter-spacing:1.077px;white-space:pre;transform:scale(1.000,1.060);transform-origin:0 23.11px;">Cooling demand:</div>
<div style="left:364.78px;top:1625.26px;font-size:32.5px;line-height:32.5px;color:#000;letter-spacing:0.000px;white-space:pre;-webkit-text-stroke:0.75px #000;">7.7</div>
<div style="left:425.90px;top:1624.58px;font-size:33.8px;line-height:33.8px;color:#000;letter-spacing:0.430px;white-space:pre;">kBtu/ft²yr</div>
<div style="left:781.10px;top:1614.50px;width:2.20px;height:53.20px;background:#8c8c8c;"></div>
<div style="left:893.30px;top:1614.50px;width:2.20px;height:53.20px;background:#8c8c8c;"></div>
<div style="left:1005.50px;top:1614.50px;width:2.20px;height:53.20px;background:#8c8c8c;"></div>
<div style="left:1117.70px;top:1614.50px;width:2.20px;height:53.20px;background:#8c8c8c;"></div>
<div style="left:1229.90px;top:1614.50px;width:2.20px;height:53.20px;background:#8c8c8c;"></div>
<div style="left:1342.10px;top:1614.50px;width:2.20px;height:53.20px;background:#8c8c8c;"></div>
<div style="left:1454.30px;top:1614.50px;width:2.20px;height:53.20px;background:#8c8c8c;"></div>
<div style="left:1566.50px;top:1614.50px;width:2.20px;height:53.20px;background:#8c8c8c;"></div>
<div style="left:1678.70px;top:1614.50px;width:2.20px;height:53.20px;background:#8c8c8c;"></div>
<div style="left:670.00px;top:1666.60px;width:1010.80px;height:2.20px;background:#8c8c8c;"></div>
<div style="left:670.00px;top:1628.90px;width:863.94px;height:22.30px;background:#4682b4;"></div>
<div style="left:668.70px;top:1614.50px;width:2.60px;height:56.70px;background:#111;"></div>
<div style="left:666.50px;top:1614.50px;width:3.50px;height:2.00px;background:#333;"></div>
<div style="left:666.50px;top:1666.70px;width:3.50px;height:2.00px;background:#333;"></div>
<div style="left:1656.06px;top:1614.50px;width:2.60px;height:56.70px;background:#111;"></div>
<div style="left:660.97px;top:1672.28px;font-size:23.5px;line-height:23.5px;color:#000;letter-spacing:0.000px;white-space:pre;">0</div>
<div style="left:772.77px;top:1672.28px;font-size:23.5px;line-height:23.5px;color:#000;letter-spacing:0.000px;white-space:pre;">1</div>
<div style="left:885.37px;top:1672.28px;font-size:23.5px;line-height:23.5px;color:#000;letter-spacing:0.000px;white-space:pre;">2</div>
<div style="left:997.57px;top:1672.28px;font-size:23.5px;line-height:23.5px;color:#000;letter-spacing:0.000px;white-space:pre;">3</div>
<div style="left:1109.77px;top:1672.28px;font-size:23.5px;line-height:23.5px;color:#000;letter-spacing:0.000px;white-space:pre;">4</div>
<div style="left:1221.97px;top:1672.28px;font-size:23.5px;line-height:23.5px;color:#000;letter-spacing:0.000px;white-space:pre;">5</div>
<div style="left:1334.17px;top:1672.28px;font-size:23.5px;line-height:23.5px;color:#000;letter-spacing:0.000px;white-space:pre;">6</div>
<div style="left:1445.17px;top:1672.28px;font-size:23.5px;line-height:23.5px;color:#000;letter-spacing:0.000px;white-space:pre;">7</div>
<div style="left:1558.57px;top:1672.28px;font-size:23.5px;line-height:23.5px;color:#000;letter-spacing:0.000px;white-space:pre;">8</div>
<div style="left:1670.77px;top:1672.28px;font-size:23.5px;line-height:23.5px;color:#000;letter-spacing:0.000px;white-space:pre;">9</div>
<svg style="left:1711.90px;top:1606.50px" width="66" height="66" viewBox="0 0 66 66"><circle cx="33" cy="33" r="32.7" fill="#90ee90" stroke="#c0c8c0" stroke-width="0.8"/><path d="M7 41.5 L11 34.5 L29.5 46.5 L56 19.5 L62 24.5 L31 58 Z" fill="#006400"/></svg>
<div style="left:18.10px;top:1716.09px;font-size:27.3px;line-height:27.3px;color:#000;letter-spacing:1.127px;white-space:pre;transform:scale(1.000,1.060);transform-origin:0 23.11px;">Heating load:</div>
<div style="left:348.90px;top:1716.47px;font-size:32.5px;line-height:32.5px;color:#000;letter-spacing:-0.015px;white-space:pre;-webkit-text-stroke:0.75px #000;">8.46</div>
<div style="left:425.90px;top:1714.88px;font-size:33.8px;line-height:33.8px;color:#000;letter-spacing:0.279px;white-space:pre;">Btu/hr ft²</div>
<div style="left:837.20px;top:1707.00px;width:2.20px;height:50.70px;background:#8c8c8c;"></div>
<div style="left:1005.50px;top:1707.00px;width:2.20px;height:50.70px;background:#8c8c8c;"></div>
<div style="left:1173.80px;top:1707.00px;width:2.20px;height:50.70px;background:#8c8c8c;"></div>
<div style="left:1342.10px;top:1707.00px;width:2.20px;height:50.70px;background:#8c8c8c;"></div>
<div style="left:1510.40px;top:1707.00px;width:2.20px;height:50.70px;background:#8c8c8c;"></div>
<div style="left:1678.70px;top:1707.00px;width:2.20px;height:50.70px;background:#8c8c8c;"></div>
<div style="left:670.00px;top:1756.60px;width:1010.80px;height:2.20px;background:#8c8c8c;"></div>
<div style="left:670.00px;top:1721.40px;width:1009.80px;height:19.80px;background:#4682b4;"></div>
<div style="left:668.70px;top:1707.00px;width:2.60px;height:54.20px;background:#111;"></div>
<div style="left:666.50px;top:1707.00px;width:3.50px;height:2.00px;background:#333;"></div>
<div style="left:666.50px;top:1756.70px;width:3.50px;height:2.00px;background:#333;"></div>
<div style="left:1644.84px;top:1707.00px;width:2.60px;height:54.20px;background:#111;"></div>
<div style="left:660.97px;top:1762.28px;font-size:23.5px;line-height:23.5px;color:#000;letter-spacing:0.000px;white-space:pre;">0</div>
<div style="left:828.47px;top:1762.28px;font-size:23.5px;line-height:23.5px;color:#000;letter-spacing:0.000px;white-space:pre;">1</div>
<div style="left:997.57px;top:1762.28px;font-size:23.5px;line-height:23.5px;color:#000;letter-spacing:0.000px;white-space:pre;">2</div>
<div style="left:1165.87px;top:1762.28px;font-size:23.5px;line-height:23.5px;color:#000;letter-spacing:0.000px;white-space:pre;">3</div>
<div style="left:1334.17px;top:1762.28px;font-size:23.5px;line-height:23.5px;color:#000;letter-spacing:0.000px;white-space:pre;">4</div>
<div style="left:1502.47px;top:1762.28px;font-size:23.5px;line-height:23.5px;color:#000;letter-spacing:0.000px;white-space:pre;">5</div>
<div style="left:1670.77px;top:1762.28px;font-size:23.5px;line-height:23.5px;color:#000;letter-spacing:0.000px;white-space:pre;">6</div>
<svg style="left:1711.90px;top:1697.15px" width="66" height="66" viewBox="0 0 66 66"><circle cx="33" cy="33" r="32.7" fill="#ffa07a" stroke="#c8b4ac" stroke-width="0.8"/><path d="M16.5 17 L52 52.5 M51.5 16 L16 51.5" stroke="#8b0000" stroke-width="7.6"/><path d="M12.5 20 L19 13.5 M48.5 57 L56 49.5 M48 13 L55 19.5 M13 48.5 L19.5 55.5" stroke="#8b0000" stroke-width="3.2"/></svg>
<div style="left:18.90px;top:1808.19px;font-size:27.3px;line-height:27.3px;color:#000;letter-spacing:1.021px;white-space:pre;transform:scale(1.000,1.060);transform-origin:0 23.11px;">Cooling load:</div>
<div style="left:349.20px;top:1808.09px;font-size:32.5px;line-height:32.5px;color:#000;letter-spacing:-0.148px;white-space:pre;-webkit-text-stroke:0.75px #000;">4.17</div>
<div style="left:425.90px;top:1807.48px;font-size:33.8px;line-height:33.8px;color:#000;letter-spacing:0.279px;white-space:pre;">Btu/hr ft²</div>
<div style="left:837.20px;top:1799.50px;width:2.20px;height:50.50px;background:#8c8c8c;"></div>
<div style="left:1005.50px;top:1799.50px;width:2.20px;height:50.50px;background:#8c8c8c;"></div>
<div style="left:1173.80px;top:1799.50px;width:2.20px;height:50.50px;background:#8c8c8c;"></div>
<div style="left:1342.10px;top:1799.50px;width:2.20px;height:50.50px;background:#8c8c8c;"></div>
<div style="left:1510.40px;top:1799.50px;width:2.20px;height:50.50px;background:#8c8c8c;"></div>
<div style="left:1678.70px;top:1799.50px;width:2.20px;height:50.50px;background:#8c8c8c;"></div>
<div style="left:670.00px;top:1848.90px;width:1010.80px;height:2.20px;background:#8c8c8c;"></div>
<div style="left:670.00px;top:1813.90px;width:701.81px;height:19.80px;background:#4682b4;"></div>
<div style="left:668.70px;top:1799.50px;width:2.60px;height:54.00px;background:#111;"></div>
<div style="left:666.50px;top:1799.50px;width:3.50px;height:2.00px;background:#333;"></div>
<div style="left:666.50px;top:1849.00px;width:3.50px;height:2.00px;background:#333;"></div>
<div style="left:1074.30px;top:1799.50px;width:2.60px;height:54.00px;background:#111;"></div>
<div style="left:660.97px;top:1854.58px;font-size:23.5px;line-height:23.5px;color:#000;letter-spacing:0.000px;white-space:pre;">0</div>
<div style="left:828.47px;top:1854.58px;font-size:23.5px;line-height:23.5px;color:#000;letter-spacing:0.000px;white-space:pre;">1</div>
<div style="left:997.57px;top:1854.58px;font-size:23.5px;line-height:23.5px;color:#000;letter-spacing:0.000px;white-space:pre;">2</div>
<div style="left:1165.87px;top:1854.58px;font-size:23.5px;line-height:23.5px;color:#000;letter-spacing:0.000px;white-space:pre;">3</div>
<div style="left:1334.17px;top:1854.58px;font-size:23.5px;line-height:23.5px;color:#000;letter-spacing:0.000px;white-space:pre;">4</div>
<div style="left:1502.47px;top:1854.58px;font-size:23.5px;line-height:23.5px;color:#000;letter-spacing:0.000px;white-space:pre;">5</div>
<div style="left:1670.77px;top:1854.58px;font-size:23.5px;line-height:23.5px;color:#000;letter-spacing:0.000px;white-space:pre;">6</div>
<svg style="left:1711.90px;top:1789.55px" width="66" height="66" viewBox="0 0 66 66"><circle cx="33" cy="33" r="32.7" fill="#ffa07a" stroke="#c8b4ac" stroke-width="0.8"/><path d="M16.5 17 L52 52.5 M51.5 16 L16 51.5" stroke="#8b0000" stroke-width="7.6"/><path d="M12.5 20 L19 13.5 M48.5 57 L56 49.5 M48 13 L55 19.5 M13 48.5 L19.5 55.5" stroke="#8b0000" stroke-width="3.2"/></svg>
<div style="left:18.90px;top:1900.39px;font-size:27.3px;line-height:27.3px;color:#000;letter-spacing:0.827px;white-space:pre;transform:scale(1.000,1.060);transform-origin:0 23.11px;">Source energy:</div>
<div style="left:331.50px;top:1900.80px;font-size:32.5px;line-height:32.5px;color:#000;letter-spacing:-0.029px;white-space:pre;-webkit-text-stroke:0.75px #000;">45.66</div>
<div style="left:425.90px;top:1899.98px;font-size:33.8px;line-height:33.8px;color:#000;letter-spacing:0.452px;white-space:pre;">kBtu/ft²yr</div>
<div style="left:813.16px;top:1889.50px;width:2.20px;height:53.20px;background:#8c8c8c;"></div>
<div style="left:957.41px;top:1889.50px;width:2.20px;height:53.20px;background:#8c8c8c;"></div>
<div style="left:1101.67px;top:1889.50px;width:2.20px;height:53.20px;background:#8c8c8c;"></div>
<div style="left:1245.93px;top:1889.50px;width:2.20px;height:53.20px;background:#8c8c8c;"></div>
<div style="left:1390.19px;top:1889.50px;width:2.20px;height:53.20px;background:#8c8c8c;"></div>
<div style="left:1534.44px;top:1889.50px;width:2.20px;height:53.20px;background:#8c8c8c;"></div>
<div style="left:1678.70px;top:1889.50px;width:2.20px;height:53.20px;background:#8c8c8c;"></div>
<div style="left:670.00px;top:1941.60px;width:1010.80px;height:2.20px;background:#8c8c8c;"></div>
<div style="left:670.00px;top:1903.90px;width:658.68px;height:22.30px;background:#4682b4;"></div>
<div style="left:668.70px;top:1889.50px;width:2.60px;height:56.70px;background:#111;"></div>
<div style="left:666.50px;top:1889.50px;width:3.50px;height:2.00px;background:#333;"></div>
<div style="left:666.50px;top:1941.70px;width:3.50px;height:2.00px;background:#333;"></div>
<div style="left:1173.60px;top:1889.50px;width:2.60px;height:56.70px;background:#111;"></div>
<div style="left:660.97px;top:1947.28px;font-size:23.5px;line-height:23.5px;color:#000;letter-spacing:0.000px;white-space:pre;">0</div>
<div style="left:798.01px;top:1947.28px;font-size:23.5px;line-height:23.5px;color:#000;letter-spacing:0.000px;white-space:pre;">10</div>
<div style="left:942.78px;top:1947.28px;font-size:23.5px;line-height:23.5px;color:#000;letter-spacing:0.000px;white-space:pre;">20</div>
<div style="left:1087.15px;top:1947.28px;font-size:23.5px;line-height:23.5px;color:#000;letter-spacing:0.000px;white-space:pre;">30</div>
<div style="left:1231.52px;top:1947.28px;font-size:23.5px;line-height:23.5px;color:#000;letter-spacing:0.000px;white-space:pre;">40</div>
<div style="left:1375.49px;top:1947.28px;font-size:23.5px;line-height:23.5px;color:#000;letter-spacing:0.000px;white-space:pre;">50</div>
<div style="left:1519.86px;top:1947.28px;font-size:23.5px;line-height:23.5px;color:#000;letter-spacing:0.000px;white-space:pre;">60</div>
<div style="left:1662.23px;top:1947.28px;font-size:23.5px;line-height:23.5px;color:#000;letter-spacing:0.000px;white-space:pre;">70</div>
<svg style="left:1711.90px;top:1880.90px" width="66" height="66" viewBox="0 0 66 66"><circle cx="33" cy="33" r="32.7" fill="#ffa07a" stroke="#c8b4ac" stroke-width="0.8"/><path d="M16.5 17 L52 52.5 M51.5 16 L16 51.5" stroke="#8b0000" stroke-width="7.6"/><path d="M12.5 20 L19 13.5 M48.5 57 L56 49.5 M48 13 L55 19.5 M13 48.5 L19.5 55.5" stroke="#8b0000" stroke-width="3.2"/></svg>
<div style="left:18.90px;top:1990.19px;font-size:27.3px;line-height:27.3px;color:#000;letter-spacing:0.730px;white-space:pre;transform:scale(1.000,1.060);transform-origin:0 23.11px;">Site energy:</div>
<div style="left:331.20px;top:1990.09px;font-size:32.5px;line-height:32.5px;color:#000;letter-spacing:-0.104px;white-space:pre;-webkit-text-stroke:0.75px #000;">25.49</div>
<div style="left:425.90px;top:1989.48px;font-size:33.8px;line-height:33.8px;color:#000;letter-spacing:0.452px;white-space:pre;">kBtu/ft²yr</div>
<div style="left:837.20px;top:1982.20px;width:2.20px;height:50.10px;background:#8c8c8c;"></div>
<div style="left:1005.50px;top:1982.20px;width:2.20px;height:50.10px;background:#8c8c8c;"></div>
<div style="left:1173.80px;top:1982.20px;width:2.20px;height:50.10px;background:#8c8c8c;"></div>
<div style="left:1342.10px;top:1982.20px;width:2.20px;height:50.10px;background:#8c8c8c;"></div>
<div style="left:1510.40px;top:1982.20px;width:2.20px;height:50.10px;background:#8c8c8c;"></div>
<div style="left:1678.70px;top:1982.20px;width:2.20px;height:50.10px;background:#8c8c8c;"></div>
<div style="left:670.00px;top:2031.20px;width:1010.80px;height:2.20px;background:#8c8c8c;"></div>
<div style="left:670.00px;top:1996.90px;width:857.99px;height:19.20px;background:#4682b4;"></div>
<div style="left:668.70px;top:1982.20px;width:2.60px;height:53.60px;background:#111;"></div>
<div style="left:666.50px;top:1982.20px;width:3.50px;height:2.00px;background:#333;"></div>
<div style="left:666.50px;top:2031.30px;width:3.50px;height:2.00px;background:#333;"></div>
<div style="left:660.97px;top:2036.60px;font-size:23.5px;line-height:23.5px;color:#000;letter-spacing:0.000px;white-space:pre;">0</div>
<div style="left:829.27px;top:2036.60px;font-size:23.5px;line-height:23.5px;color:#000;letter-spacing:0.000px;white-space:pre;">5</div>
<div style="left:990.63px;top:2036.60px;font-size:23.5px;line-height:23.5px;color:#000;letter-spacing:0.000px;white-space:pre;">10</div>
<div style="left:1158.93px;top:2036.60px;font-size:23.5px;line-height:23.5px;color:#000;letter-spacing:0.000px;white-space:pre;">15</div>
<div style="left:1327.23px;top:2036.60px;font-size:23.5px;line-height:23.5px;color:#000;letter-spacing:0.000px;white-space:pre;">20</div>
<div style="left:1495.93px;top:2036.60px;font-size:23.5px;line-height:23.5px;color:#000;letter-spacing:0.000px;white-space:pre;">25</div>
<div style="left:1664.23px;top:2036.60px;font-size:23.5px;line-height:23.5px;color:#000;letter-spacing:0.000px;white-space:pre;">30</div>
<div style="left:0.00px;top:2086.00px;width:2349.00px;height:2.00px;background:#6a6a6a;"></div>
<div style="left:0.00px;top:2087.80px;width:2349.00px;height:13.20px;background:#292929;"></div>
<div style="left:0.00px;top:1428.00px;width:1.50px;height:659.00px;background:#6e6e6e;"></div>
</body></html>
